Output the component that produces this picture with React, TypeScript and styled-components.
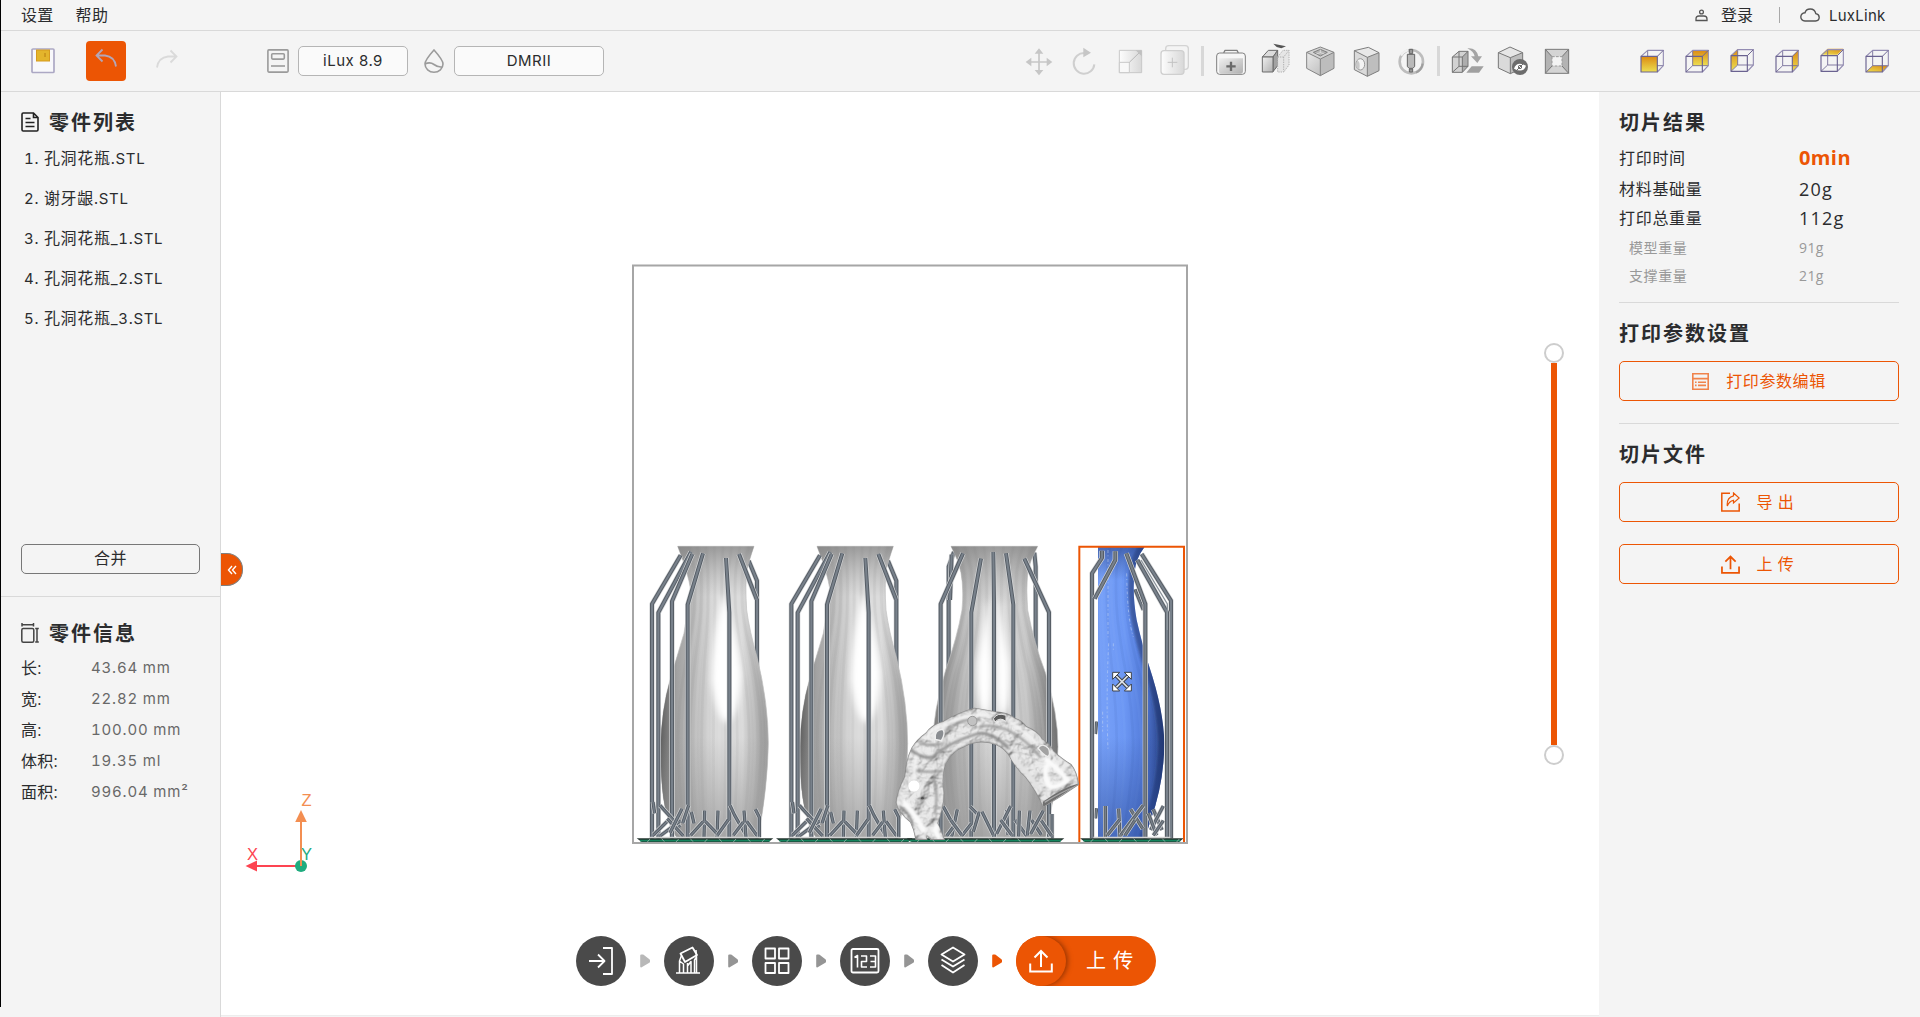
import React from "react";
import styled, { createGlobalStyle } from "styled-components";

const ORANGE = "#ec5504";
const PANEL = "#f4f4f4";
const LINE = "#d9d9d9";
const INK = "#2b2c2e";

const GlobalStyle = createGlobalStyle`
  * { box-sizing: border-box; }
  html, body { margin: 0; padding: 0; background: ${PANEL}; overflow: hidden; }
  body { font-family: "Open Sans", "Noto Sans CJK SC", sans-serif; color: ${INK}; }
  button { font-family: inherit; margin: 0; padding: 0; cursor: pointer; }
  svg { display: block; flex: none; }
`;

const Shell = styled.div`
  position: relative;
  width: 1920px;
  height: 1017px;
  display: flex;
  flex-direction: column;
  background: ${PANEL};
  overflow: hidden;
`;

const WindowEdge = styled.div`
  position: absolute;
  left: 0;
  top: 0;
  width: 1px;
  height: 1007px;
  background: #000;
`;

const MenuBar = styled.header`
  height: 31px;
  display: flex;
  align-items: center;
  padding: 0 33px 0 21px;
  border-bottom: 1px solid ${LINE};
  font-size: 16px;
`;

const MenuItem = styled.span<{ $gap?: number; $spacing?: number }>`
  line-height: 30px;
  letter-spacing: ${(p) => p.$spacing ?? 0.3}px;
  margin-right: ${(p) => p.$gap ?? 0}px;
  white-space: nowrap;
`;

const LinkItem = styled.span`
  width: 58px;
  font-family: Inter, sans-serif;
  font-size: 15px;
  line-height: 30px;
  padding-top: 2px;
  letter-spacing: 0.25px;
  white-space: nowrap;
`;

const Spacer = styled.div`
  flex: 1;
`;

const MenuDivider = styled.div`
  width: 1px;
  height: 16px;
  background: #a8a8a8;
  margin: 0 20px 0 26px;
`;

const ToolBar = styled.div`
  height: 61px;
  flex: none;
  display: flex;
  align-items: center;
  padding: 0 20px 1px 31px;
  border-bottom: 1px solid ${LINE};
`;

const UndoButton = styled.button`
  width: 40px;
  height: 40px;
  margin: 0 30px 0 31px;
  padding-bottom: 1px;
  display: flex;
  align-items: center;
  justify-content: center;
  border: 0;
  border-radius: 4px;
  background: ${ORANGE};
`;

const Select = styled.div<{ $width: number; $before: number; $after: number }>`
  width: ${(p) => p.$width}px;
  height: 30px;
  margin-left: ${(p) => p.$before}px;
  margin-right: ${(p) => p.$after}px;
  border: 1px solid #b5b5b5;
  border-radius: 5px;
  background: #fafafa;
  font-family: Inter, sans-serif;
  font-size: 15px;
  line-height: 28px;
  letter-spacing: 0.5px;
  text-align: center;
`;

const ToolGroup = styled.div`
  display: flex;
  align-items: center;
  margin-right: 50px;
`;

const ViewGroup = styled.div`
  display: flex;
`;

const ToolDivider = styled.div`
  width: 3px;
  height: 30px;
  background: #d8d8d8;
`;

const Body = styled.main`
  flex: 1;
  display: flex;
  min-height: 0;
`;

const LeftPanel = styled.aside`
  width: 221px;
  flex: none;
  border-right: 1px solid ${LINE};
`;

const PartSection = styled.section`
  height: 505px;
  display: flex;
  flex-direction: column;
  padding: 13px 20px 22px 21px;
  border-bottom: 1px solid ${LINE};
`;

const InfoSection = styled.section`
  padding: 19px 20px 0 21px;
`;

const Title = styled.h2<{ $gap?: number; $after?: number }>`
  height: 34px;
  margin: 0 0 ${(p) => p.$after ?? 0}px;
  display: flex;
  align-items: center;
  gap: ${(p) => p.$gap ?? 0}px;
  font-family: "Noto Sans CJK SC", sans-serif;
  font-size: 20px;
  font-weight: 700;
  line-height: 30px;
  letter-spacing: 2px;
`;

const PartItem = styled.div`
  height: 40px;
  padding-left: 3px;
  font-family: Inter, sans-serif;
  font-size: 15px;
  font-variant-numeric: tabular-nums;
  line-height: 40px;
  letter-spacing: 0.7px;
  white-space: pre;
`;

const Han = styled.span`
  font-family: "Noto Sans CJK SC", sans-serif;
  font-size: 16px;
  line-height: 1;
`;

const MergeButton = styled.button`
  width: 179px;
  height: 30px;
  margin-top: auto;
  padding-bottom: 1px;
  border: 1px solid #777;
  border-radius: 5px;
  background: transparent;
  color: ${INK};
  font-size: 16px;
  line-height: 27px;
  letter-spacing: 0.6px;
`;

const InfoRow = styled.div`
  height: 31px;
  display: flex;
  align-items: center;
  font-size: 16px;
  line-height: 30px;
  padding-bottom: 1px;
`;

const InfoLabel = styled.span`
  width: 70px;
  letter-spacing: 0.2px;
`;

const InfoValue = styled.span`
  font-family: Inter, sans-serif;
  font-size: 15px;
  font-variant-numeric: tabular-nums;
  color: #686868;
  letter-spacing: 0.8px;
  white-space: nowrap;
`;

const Viewport = styled.div`
  position: relative;
  width: 1378px;
  height: 924px;
  flex: none;
  background: #fff;
  display: flex;
  flex-direction: column;
  justify-content: flex-end;
  align-items: flex-start;
`;

const Scene = styled.svg`
  position: absolute;
  left: 0;
  top: 0;
`;

const CollapseTab = styled.button`
  position: absolute;
  left: 0;
  top: 461px;
  width: 22px;
  height: 33px;
  border: 1px solid #808080;
  border-left: 0;
  border-radius: 0 16px 16px 0;
  background: ${ORANGE};
  display: flex;
  align-items: center;
  justify-content: center;
`;

const Slider = styled.div`
  position: absolute;
  left: 1323px;
  top: 251px;
  width: 20px;
  height: 422px;
  display: flex;
  flex-direction: column;
  align-items: center;
`;

const Handle = styled.div`
  width: 20px;
  height: 20px;
  flex: none;
  border: 2px solid #cdcdcd;
  border-radius: 50%;
  background: #fff;
`;

const Track = styled.div`
  width: 6px;
  flex: 1;
  background: ${ORANGE};
`;

const Steps = styled.nav`
  position: relative;
  display: flex;
  align-items: center;
  gap: 14px;
  margin: 0 0 30px 355px;
`;

const StepButton = styled.button`
  width: 50px;
  height: 50px;
  border: 0;
  border-radius: 50%;
  background: #4a4a4a;
  display: flex;
  align-items: center;
  justify-content: center;
`;

const UploadPill = styled.button`
  width: 140px;
  height: 50px;
  border: 0;
  border-radius: 25px;
  background: ${ORANGE};
  color: #fff;
  display: flex;
  align-items: center;
  overflow: hidden;
  font-size: 20px;
  letter-spacing: 1px;
`;

const UploadCap = styled.span`
  width: 50px;
  height: 50px;
  border-radius: 50%;
  background: ${ORANGE};
  box-shadow: 2px 0 5px rgba(90, 30, 0, 0.55);
  display: flex;
  align-items: center;
  justify-content: center;
  margin-right: 20px;
`;

const RightPanel = styled.aside`
  flex: 1;
  padding: 13px 21px 0 20px;
`;

const ResultRow = styled.div<{ $height: number; $minor?: boolean }>`
  height: ${(p) => p.$height}px;
  display: flex;
  align-items: center;
  padding-left: ${(p) => (p.$minor ? 10 : 0)}px;
  padding-bottom: ${(p) => (p.$minor ? 1 : 2)}px;
  font-size: ${(p) => (p.$minor ? 14 : 16)}px;
  letter-spacing: ${(p) => (p.$minor ? 0.6 : 0.7)}px;
  color: ${(p) => (p.$minor ? "#999" : INK)};
  line-height: 28px;
`;

const ResultLabel = styled.span<{ $minor?: boolean }>`
  width: ${(p) => (p.$minor ? 170 : 180)}px;
`;

const ResultValue = styled.span<{ $kind?: "hot" | "minor" }>`
  font-size: ${(p) => (p.$kind === "hot" ? 20 : p.$kind === "minor" ? 14 : 18)}px;
  font-weight: ${(p) => (p.$kind === "hot" ? 700 : 400)};
  color: ${(p) => (p.$kind === "hot" ? ORANGE : "inherit")};
  letter-spacing: ${(p) => (p.$kind ? 0.4 : 1.2)}px;
`;

const Rule = styled.hr<{ $top: number; $bottom: number }>`
  height: 1px;
  border: 0;
  background: ${LINE};
  margin: ${(p) => p.$top}px 0 ${(p) => p.$bottom}px;
`;

const OutlineButton = styled.button<{ $gap: number; $top: number; $inset?: number }>`
  width: 280px;
  height: 40px;
  margin-top: ${(p) => p.$top}px;
  padding-right: ${(p) => p.$inset ?? 0}px;
  display: flex;
  align-items: center;
  justify-content: center;
  gap: ${(p) => p.$gap}px;
  border: 1px solid ${ORANGE};
  border-radius: 5px;
  background: transparent;
  color: ${ORANGE};
  font-size: 16px;
  letter-spacing: 0.6px;
`;

const Caption = styled.span`
  padding-bottom: 3px;
`;

/* ---------- toolbar drawings, three units per pixel ---------- */

const Tool = ({ x, w, children }: { x: number; w: number; children: React.ReactNode }) => (
  <svg width={w / 3} height={52} viewBox={`${x} 0 ${w} 156`} fill="none" strokeLinejoin="round">
    {children}
  </svg>
);

const GradientDefs = styled.svg`
  position: absolute;
`;

const Gradients = () => (
  <GradientDefs width="0" height="0">
    <defs>
      <linearGradient id="steel" x1="0" y1="0" x2="1" y2="1">
        <stop offset="0" stopColor="#f0f0f0" />
        <stop offset="1" stopColor="#b0b0b0" />
      </linearGradient>
      <linearGradient id="pale" x1="0" y1="0" x2="1" y2="0">
        <stop offset="0" stopColor="#fdfdfd" />
        <stop offset="1" stopColor="#d8d8d8" />
      </linearGradient>
      <linearGradient id="gold" x1="0" y1="0" x2="0" y2="1">
        <stop offset="0" stopColor="#dc8a12" />
        <stop offset="1" stopColor="#ecdf52" />
      </linearGradient>
      <linearGradient id="goldFlat" x1="0" y1="1" x2="1" y2="0">
        <stop offset="0" stopColor="#ecdf52" />
        <stop offset="1" stopColor="#dc8a12" />
      </linearGradient>
    </defs>
  </GradientDefs>
);

const MoveTool = () => (
  <Tool x={9} w={135}>
    <path d="M46 81H98M72 54V108" stroke="#c6c6c6" strokeWidth="5" />
    <path d="M32 81l17-13v26zM112 81l-17-13v26zM72 40l-13 16h26zM72 121l-13-16h26z" fill="#c6c6c6" />
  </Tool>
);

const RotateTool = () => (
  <Tool x={144} w={135}>
    <path d="M208 54A31 31 0 1 0 238 88" stroke="#cfcfcf" strokeWidth="6" />
    <path d="M205 38l23 15-23 14z" fill="#c6c6c6" />
  </Tool>
);

const ScaleTool = () => (
  <Tool x={279} w={135}>
    <path d="M313 46h67v67h-67z" fill="url(#pale)" stroke="#c8c8c8" strokeWidth="3" />
    <path d="M313 82h30v31h-30z" fill="#f8f8f8" stroke="#c8c8c8" strokeWidth="3" />
    <path d="M343 82L378 48" stroke="#b8b8b8" strokeWidth="3" />
    <path d="M362 46h18v18z" fill="#c0c0c0" />
  </Tool>
);

const CopyTool = () => (
  <Tool x={414} w={144}>
    <rect x="452" y="32" width="68" height="71" rx="9" stroke="#d3d3d3" strokeWidth="4" />
    <rect x="438" y="47" width="69" height="71" rx="9" fill="url(#pale)" stroke="#cfcfcf" strokeWidth="4" />
    <path d="M458 82h29M472 68v29" stroke="#c2c2c2" strokeWidth="3" />
  </Tool>
);

const RepairTool = () => (
  <Tool x={567} w={147}>
    <path d="M626 54l4-8h36l4 8" stroke="#808080" strokeWidth="4" />
    <rect x="605" y="54" width="86" height="64" rx="9" fill="#f6f6f6" stroke="#808080" strokeWidth="3" />
    <path d="M612 70h72v38q0 8-8 8h-56q-8 0-8-8z" fill="url(#steel)" />
    <path d="M634 94h28M648 80v28" stroke="#6a6a6a" strokeWidth="7" />
  </Tool>
);

const CutTool = () => (
  <Tool x={714} w={135}>
    <path d="M742 66l18-20h28l-14 20z" fill="#dcdcdc" stroke="#6b6b6b" strokeWidth="3" />
    <path d="M774 66l14-20v46l-14 18z" fill="#a2a2a2" stroke="#6b6b6b" strokeWidth="3" />
    <path d="M742 66h32v45h-32z" fill="url(#steel)" stroke="#6b6b6b" strokeWidth="3" />
    <path d="M788 66l16-20h18v44l-16 21h-18z" fill="#e6e6e6" stroke="#b0b0b0" strokeWidth="3" strokeDasharray="4 3" />
    <path d="M806 66v44M788 66h18l16-20" stroke="#b0b0b0" strokeWidth="3" strokeDasharray="4 3" />
    <path d="M775 26l38 8-14 6-14-4z" fill="#555" />
  </Tool>
);

const HollowTool = () => (
  <Tool x={24} w={135}>
    <path d="M50 52L91 36l41 16v48l-41 22-41-22z" fill="url(#steel)" />
    <path d="M50 52L91 36l41 16-41 20z" fill="#d4d4d4" />
    <path d="M91 72l41-20v48l-41 22z" fill="#bdbdbd" />
    <path d="M70 52l21-9 21 9-21 11z" fill="#b4b4b4" stroke="#808080" strokeWidth="3" />
    <path d="M91 44v9l-12 4M91 53l12 4" stroke="#eee" strokeWidth="2" />
    <path d="M50 52L91 36l41 16v48l-41 22-41-22zM50 52l41 20 41-20M91 72v50" stroke="#858585" strokeWidth="3" />
  </Tool>
);

const PunchTool = () => (
  <Tool x={159} w={135}>
    <path d="M193 47l42-10 32 16-35 14z" fill="#e8e8e8" />
    <path d="M193 47l39 20v57l-39-20z" fill="#dadada" />
    <path d="M232 67l35-14v54l-35 17z" fill="#bebebe" />
    <path d="M193 47l42-10 32 16v54l-35 17-39-20zM193 47l39 20 35-14M232 67v57" stroke="#7d7d7d" strokeWidth="3" />
    <ellipse cx="211" cy="88" rx="13" ry="17" fill="#f4f4f4" stroke="#999" strokeWidth="3" />
    <path d="M202 76q10 5 6 27q-9-2-10-14z" fill="#c8c8c8" />
  </Tool>
);

const DrainTool = () => (
  <Tool x={294} w={147}>
    <circle cx="364" cy="80" r="35" stroke="#bdbdbd" strokeWidth="8" />
    <path d="M333 62a35 35 0 0 1 22-17" stroke="#f0f0f0" strokeWidth="7" />
    <path d="M398 86a35 35 0 0 1-20 27" stroke="#9e9e9e" strokeWidth="6" />
    <path d="M352 58h22v36l-5 6h-12l-5-6z" fill="#b9b9b9" stroke="#666" strokeWidth="3" />
    <path d="M358 43h10v13h-10zM358 102h10v9h-10z" fill="#999" stroke="#666" strokeWidth="3" />
  </Tool>
);

const LayFlatTool = () => (
  <Tool x={450} w={150}>
    <path d="M487 66l20-17h27v45l-17 18h-30z" fill="#d2d2d2" />
    <path d="M517 66l17-17v45l-17 18z" fill="#adadad" />
    <path d="M487 66l20-17h27v45l-17 18h-30zM487 66h30l17-17M517 66v46M507 49v45h27M507 94l-20 18" stroke="#747474" strokeWidth="3" />
    <path d="M532 40q27-3 33 24h11l-14 20-19-20h11q-3-15-22-24z" fill="#a5a5a5" />
    <path d="M545 94h36l-14 19h-38z" fill="#a0a0a0" />
  </Tool>
);

const HideTool = () => (
  <Tool x={600} w={141}>
    <path d="M625 53l35-17 38 17-37 15z" fill="#e6e6e6" />
    <path d="M625 53l36 15v48l-36-17z" fill="#dadada" />
    <path d="M661 68l37-15v46l-37 17z" fill="#bdbdbd" />
    <path d="M625 53l35-17 38 17v46l-37 17-36-17zM625 53l36 15 37-15M661 68v48" stroke="#777" strokeWidth="3" />
    <circle cx="690" cy="96" r="24" fill="#6c6c6c" />
    <path d="M672 101q8-24 36-9q-8 24-36 9z" fill="#fff" />
    <circle cx="690" cy="96" r="5" stroke="#6c6c6c" strokeWidth="3" />
    <path d="M676 110L704 82" stroke="#6c6c6c" strokeWidth="3" />
  </Tool>
);

const FrameTool = () => (
  <Tool x={741} w={129}>
    <path d="M766 43h70v72h-70z" fill="#d4d4d4" />
    <path d="M766 43l20 22v28l-20 22zM836 43l-20 22v28l20 22z" fill="#b3b3b3" />
    <path d="M766 43h70v72h-70zM766 43l20 22M836 43l-20 22M766 115l20-22M836 115l-20-22" stroke="#777" strokeWidth="3" />
    <path d="M786 65h30v28h-30z" fill="#f3f3f3" stroke="#999" strokeWidth="3" strokeDasharray="8 4" />
  </Tool>
);

const cubeFaces: { fill: string; d: string; up?: boolean }[] = [
  { fill: "url(#gold)", d: "M33 49h49v47H33z" },
  { fill: "url(#gold)", d: "M53 31h47v46H53z" },
  { fill: "url(#gold)", d: "M33 49l20-20v47L33 95z", up: true },
  { fill: "url(#gold)", d: "M82 49l18-18v46L82 96z" },
  { fill: "url(#goldFlat)", d: "M33 46l20-18h47L82 46z", up: true },
  { fill: "url(#goldFlat)", d: "M33 96l20-19h47L82 96z" },
];

const ViewCube = ({ index }: { index: number }) => {
  const face = cubeFaces[index];
  return (
    <svg width={45} height={42} viewBox="0 0 135 126" fill="none" strokeLinejoin="round">
      <g transform={`translate(0 ${face.up ? -2 : 0})`}>
        {index !== 0 && <path d={face.d} fill={face.fill} />}
        <path d="M53 31v46L33 96M53 77h47" stroke="#6f6794" strokeWidth="2.6" />
        {index === 0 && <path d={face.d} fill={face.fill} />}
        <path d="M33 49l20-18h47v46L82 96" stroke="#938cb2" strokeWidth="3.4" />
        <path d="M82 49l18-18" stroke="#6f6794" strokeWidth="3" />
        <path d="M33 49h49v47H33z" stroke="#6a6290" strokeWidth="3.4" />
      </g>
    </svg>
  );
};

const SaveIcon = () => (
  <svg width="24" height="26" viewBox="0 0 24 26" fill="none">
    <rect x="1" y="1" width="22" height="23.5" rx="1" fill="#f8f8fb" stroke="#aca8c4" strokeWidth="1.7" />
    <rect x="5.5" y="2" width="13" height="11" fill="#e3b52c" stroke="#d69a1f" />
    <path d="M14 5v4" stroke="#b87d10" />
  </svg>
);

const UndoIcon = ({ color, flip }: { color: string; flip?: boolean }) => (
  <svg width="22" height="24" viewBox="0 0 22 24" fill="none" stroke={color} strokeWidth="1.8">
    <g transform={flip ? "matrix(-1 0 0 1 22 0)" : undefined}>
      <path d="M7.5 1.5L1.5 7.5L7.5 13.5M2 7.5h8q9.5 1 11 11" />
    </g>
  </svg>
);

const Wide = styled.span<{ $after: number }>`
  display: flex;
  margin-right: ${(p) => p.$after}px;
`;

/* ---------- build plate drawing, three units per pixel ---------- */

type Strut = [number, number][];

const toPath = (s: Strut) => "M" + s.map((p) => p.join(" ")).join("L");

const Struts = ({ items, width = 12 }: { items: Strut[]; width?: number }) => (
  <g fill="none" strokeLinejoin="round" strokeLinecap="butt">
    {items.map((s, i) => (
      <g key={i}>
        <path d={toPath(s)} stroke="#d5d7d9" strokeWidth={width + 4} />
        <path d={toPath(s)} stroke="#575e66" strokeWidth={width} />
        <path d={toPath(s)} stroke="#78818b" strokeWidth={width - 6} />
      </g>
    ))}
  </g>
);

const Base = ({ from, to }: { from: number; to: number }) => {
  const marks: number[] = [];
  for (let x = from + 32; x < to - 20; x += 43) marks.push(x);
  return (
    <g>
      <path d={`M${from + 40} 922H${to - 40}`} stroke="#d2d2d2" strokeWidth="4" />
      <path d={`M${from} 925H${to}L${to - 14} 936H${from + 15}z`} fill="#24332e" />
      <path d={`M${from + 10} 932H${to - 10}`} stroke="#13845d" strokeWidth="5" />
      {marks.map((x, i) => (
        <path key={x} d={`M${x} ${i % 2 ? 926 : 936}l8 ${i % 2 ? 9 : -9}`} stroke="#b9c9c2" strokeWidth="2" />
      ))}
    </g>
  );
};

/* A silhouette edge: a start point, then control/end pairs of quadratic curves. */
type Edge = [number, number][];

const sideEdge: Edge = [
  [402, 49], [388, 90], [381, 118], [375, 165], [380, 240], [388, 300], [412, 385],
  [445, 520], [445, 640], [443, 770], [414, 925],
];
const frontEdge: Edge = [
  [473, 49], [450, 90], [443, 128], [438, 180], [443, 240], [462, 340], [497, 430],
  [534, 550], [534, 650], [532, 770], [496, 925],
];
const blueEdge: Edge = [
  [794, 50], [768, 84], [764, 124], [756, 190], [770, 270], [788, 350], [808, 410],
  [851, 540], [853, 640], [852, 760], [795, 925],
];

const meridian = (edge: Edge, axis: number, f: number) => {
  const p = edge.map(([x, y]) => `${(axis + (x - axis) * f).toFixed(1)} ${y}`);
  let d = `M${p[0]}`;
  for (let i = 1; i < p.length; i += 2) d += `Q${p[i]} ${p[i + 1]}`;
  return d;
};

const Facets = ({ edge, axis, from, dark, light }: { edge: Edge; axis: number; from: number; dark: string; light: string }) => {
  const list: number[] = [];
  for (let f = from; f < 0.98; f += 0.115) list.push(f);
  return (
    <g fill="none" strokeWidth="8" strokeOpacity="0.08">
      {list.map((f, i) => (
        <path key={i} d={meridian(edge, axis, f)} stroke={i % 2 ? light : dark} />
      ))}
    </g>
  );
};

const sideBack: Strut = [[386, 92], [411, 152], [411, 925]];
const sideOver: Strut = [[357, 72], [410, 208]];
const sideFront: Strut[] = [
  [[182, 76], [96, 222], [96, 925]],
  [[213, 66], [115, 248], [115, 925]],
  [[217, 72], [156, 214], [156, 925]],
  [[249, 70], [203, 224], [203, 925]],
  [[318, 84], [328, 248], [328, 925]],
];
const sideFeet: Strut[] = [
  [[120, 826], [180, 892]], [[99, 816], [104, 850]], [[100, 915], [150, 866]], [[120, 918], [182, 872]],
  [[142, 866], [190, 918]], [[186, 836], [150, 908]], [[206, 826], [188, 880]], [[214, 846], [222, 880]],
  [[254, 842], [252, 922]], [[294, 842], [291, 922]], [[250, 874], [212, 916]], [[256, 874], [298, 918]],
  [[326, 868], [292, 916]], [[330, 826], [344, 856], [376, 912]], [[372, 842], [378, 922]],
  [[370, 876], [340, 916]], [[380, 874], [412, 918]], [[406, 838], [418, 862], [418, 922]],
];

const SideVase = ({ id }: { id: string }) => {
  const outline =
    "M173 49H402Q388 90 381 118Q375 165 380 240Q388 300 412 385Q445 520 445 640Q443 770 414 925H172Q150 895 135 830Q122 770 122 650Q124 540 150 450L192 310L212 180Q205 130 173 49z";
  return (
    <g>
      <Struts items={[sideBack]} />
      <clipPath id={id}>
        <path d={outline} />
      </clipPath>
      <path d={outline} fill="url(#vaseGrey)" stroke="#bfbfbf" strokeWidth="2" />
      <g clipPath={`url(#${id})`}>
        <path d="M110 925V300H195Q165 400 163 620T178 925z" fill="url(#vaseDark)" />
        <Facets edge={sideEdge} axis={290} from={-0.75} dark="#707070" light="#ffffff" />
        <path d="M308 190Q276 330 274 450Q290 570 320 580Q358 560 364 430Q350 300 308 190z" fill="#fff" filter="url(#glow)" />
        <path d="M100 620H460V930H100z" fill="url(#fadeDown)" />
        <path d="M150 45H420V200H150z" fill="url(#fadeUp)" />
      </g>
      <Struts items={[sideOver]} />
      <Struts items={sideFront} />
      <Struts items={sideFeet} width={10} />
      <Base from={50} to={460} />
    </g>
  );
};

const FrontVase = () => {
  const outline =
    "M213 49H473Q450 90 443 128Q438 180 443 240Q462 340 497 430Q534 550 534 650Q532 770 496 925H190Q162 830 157 650Q160 540 197 420Q232 320 246 240Q252 180 243 128Q235 90 213 49z";
  return (
    <g>
      <Struts items={[[[222, 66], [206, 110], [206, 600]], [[215, 74], [210, 210]], [[463, 68], [467, 110], [467, 600]]]} />
      <clipPath id="frontClip">
        <path d={outline} />
      </clipPath>
      <path d={outline} fill="url(#vaseFront)" stroke="#bfbfbf" strokeWidth="2" />
      <g clipPath="url(#frontClip)">
        <Facets edge={frontEdge} axis={345} from={-0.95} dark="#6c6c6c" light="#ffffff" />
        <path d="M322 200L290 400Q288 550 318 555Q336 540 334 400zM356 200L388 400Q392 550 366 555Q350 540 350 400z" fill="#fff" filter="url(#glow)" />
        <path d="M100 600H560V930H100z" fill="url(#fadeDown)" />
        <path d="M200 45H480V230H200z" fill="url(#fadeUp)" />
      </g>
      <Struts
        items={[
          [[249, 70], [182, 222], [182, 925]],
          [[303, 86], [274, 247], [274, 925]],
          [[340, 66], [342, 214], [342, 925]],
          [[378, 70], [400, 224], [400, 925]],
          [[433, 86], [507, 247], [507, 925]],
        ]}
      />
      <Struts
        width={10}
        items={[
          [[190, 830], [212, 870]], [[232, 838], [215, 920]], [[200, 918], [228, 880]], [[270, 830], [300, 860]],
          [[298, 845], [280, 905]], [[306, 845], [340, 915]], [[245, 918], [275, 880]], [[380, 840], [384, 915]],
          [[392, 828], [350, 912]], [[406, 870], [440, 918]], [[418, 842], [416, 920]], [[450, 842], [442, 916]],
          [[455, 870], [484, 915]], [[490, 842], [452, 912]], [[516, 852], [516, 925]], [[484, 872], [515, 918]],
          [[212, 870], [245, 915]], [[362, 870], [395, 915]],
        ]}
      />
      <Base from={80} to={553} />
    </g>
  );
};

const BlueVase = () => {
  const outline = "M654 50H794Q768 84 764 124Q756 190 770 270Q788 350 808 410Q851 540 853 640Q852 760 812 870L795 925H654z";
  return (
    <g>
      <clipPath id="blueClip">
        <path d={outline} />
      </clipPath>
      <Struts items={[[[650, 575], [646, 612]], [[650, 835], [646, 865]], [[765, 178], [790, 240]]]} width={10} />
      <path d={outline} fill="url(#vaseBlue)" />
      <g clipPath="url(#blueClip)">
        <Facets edge={blueEdge} axis={640} from={0.1} dark="#2b4c98" light="#9bbcff" />
        <path d={meridian(blueEdge, 640, 0.97)} stroke="#20376f" strokeOpacity="0.55" strokeWidth="26" fill="none" filter="url(#soft)" />
        <path d="M640 620H860V930H640z" fill="url(#blueDown)" />
        <path d="M640 50H860V150H640z" fill="url(#blueUp)" />
      </g>
      <path d="M684 60V330M686 340Q678 500 684 660M740 130Q742 270 760 320M700 340v26M668 545v60" stroke="#c9d8f2" strokeOpacity="0.65" strokeWidth="2.4" strokeDasharray="9 7 3 8" fill="none" />
      <Struts
        items={[
          [[666, 62], [666, 84], [636, 130], [636, 925]],
          [[706, 64], [706, 90], [644, 206]],
          [[739, 70], [796, 222], [796, 925]],
          [[785, 72], [873, 212], [873, 925]],
          [[772, 90], [861, 247], [861, 925]],
        ]}
      />
      <path d="M783 90L862 222V300" stroke="#8d959d" strokeWidth="4" fill="none" />
      <Struts
        width={10}
        items={[
          [[676, 828], [676, 922]], [[716, 836], [720, 922]], [[752, 838], [788, 896]], [[790, 826], [722, 916]],
          [[720, 868], [682, 916]], [[765, 870], [735, 916]], [[820, 838], [846, 900]], [[850, 828], [812, 900]],
          [[805, 850], [830, 916]], [[850, 872], [820, 916]],
        ]}
      />
      <Base from={600} to={911} />
      <path d="M598 936V50H912V936" fill="none" stroke={ORANGE} strokeWidth="6" />
    </g>
  );
};

const ARCH =
  "M108 928Q104 900 92 876Q58 850 49 818Q52 785 75 740Q78 690 96 654Q112 628 138 610Q155 585 190 575Q235 548 284 535Q315 540 345 546Q385 548 405 566Q425 572 438 590Q475 605 486 628Q508 640 520 664Q548 690 573 704Q590 725 595 763Q545 798 490 830Q468 780 438 742Q412 720 385 672Q365 645 330 638Q290 630 255 648Q215 662 196 702Q184 735 191 790Q190 835 172 880Q182 900 192 928H152Q136 905 140 928z";

const GumModel = () => (
  <g>
    <clipPath id="archClip">
      <path d={ARCH} />
    </clipPath>
    <path d={ARCH} fill="#cacaca" stroke="#8d8d8d" strokeWidth="4" />
    <g clipPath="url(#archClip)">
      <rect x="40" y="525" width="565" height="410" filter="url(#bumps)" opacity="0.6" />
      <g fill="none" strokeLinecap="round" filter="url(#soft)">
        <path d="M60 830Q100 860 96 890M92 660Q130 690 160 680Q200 640 290 612Q330 600 385 655" stroke="#858585" strokeWidth="7" />
        <path d="M100 720Q140 730 188 722M160 740Q176 790 165 850M120 640Q160 650 190 640M200 600Q250 560 300 570M300 590Q350 580 400 610Q450 640 480 680" stroke="#949494" strokeWidth="6" />
        <path d="M110 680Q100 720 104 745M140 625Q150 590 230 570Q280 550 320 556M390 575Q440 610 470 640" stroke="#f2f2f2" strokeWidth="9" />
        <path d="M75 820Q110 860 130 900M170 890Q160 900 176 920M500 690Q540 720 560 750Q540 770 510 770Q490 740 500 710" stroke="#fafafa" strokeWidth="17" />
        <path d="M400 690Q440 720 470 770" stroke="#e3e3e3" strokeWidth="16" />
        <path d="M196 706Q214 664 255 650Q290 632 330 641Q366 648 385 676" stroke="#8a8a8a" strokeWidth="5" />
      </g>
      <path d="M490 832L488 816Q550 770 598 760z" fill="#6f6f6f" />
      <path d="M494 817Q544 786 590 768" stroke="#a8a8a8" strokeWidth="4" fill="none" />
    </g>
    <path d="M166 628Q162 600 188 598Q198 610 184 632z" fill="#8a8d91" stroke="#efefef" strokeWidth="4" />
    <path d="M340 566Q352 546 378 556V574Q360 560 345 576z" fill="#5a5a5a" stroke="#e4e4e4" strokeWidth="3" />
    <path d="M474 654Q488 636 506 656Q512 672 504 680Q490 676 474 654z" fill="#a2a2a2" stroke="#ececec" strokeWidth="4" />
    <circle cx="277" cy="573" r="14" fill="#c2c2c2" stroke="#9a9a9a" strokeWidth="3" />
    <circle cx="102" cy="768" r="18" fill="#fff" stroke="#ddd" strokeWidth="2" />
  </g>
);

const MoveCursor = () => (
  <g transform="translate(726 455)">
    <path d="M-20-20L20 20M20-20L-20 20" stroke="#3c4148" strokeWidth="11" />
    <path d="M-20-20L20 20M20-20L-20 20" stroke="#dfe3e8" strokeWidth="5" />
    {[0, 90, 180, 270].map((a) => (
      <path key={a} transform={`rotate(${a})`} d="M-28-28H-7L-28-7z" fill="#fff" stroke="#3c4148" strokeWidth="3" />
    ))}
  </g>
);

const BuildScene = () => (
  <Scene width={1378} height={924} viewBox="221 92 1378 924">
    <defs>
      <linearGradient id="vaseGrey" gradientUnits="userSpaceOnUse" x1="122" y1="0" x2="446" y2="0">
        <stop offset="0" stopColor="#8c8c8c" />
        <stop offset="0.25" stopColor="#b0b0b0" />
        <stop offset="0.5" stopColor="#dadada" />
        <stop offset="0.75" stopColor="#dadada" />
        <stop offset="1" stopColor="#949494" />
      </linearGradient>
      <linearGradient id="vaseDark" gradientUnits="userSpaceOnUse" x1="122" y1="0" x2="180" y2="0">
        <stop offset="0" stopColor="#606060" />
        <stop offset="0.6" stopColor="#8c8c8c" />
        <stop offset="1" stopColor="#b0b0b0" stopOpacity="0" />
      </linearGradient>
      <linearGradient id="vaseFront" gradientUnits="userSpaceOnUse" x1="157" y1="0" x2="534" y2="0">
        <stop offset="0" stopColor="#7e7e7e" />
        <stop offset="0.25" stopColor="#b8b8b8" />
        <stop offset="0.5" stopColor="#dedede" />
        <stop offset="0.75" stopColor="#c4c4c4" />
        <stop offset="1" stopColor="#6e6e6e" />
      </linearGradient>
      <linearGradient id="vaseBlue" gradientUnits="userSpaceOnUse" x1="654" y1="0" x2="853" y2="0">
        <stop offset="0" stopColor="#78a1f8" />
        <stop offset="0.4" stopColor="#6c97f4" />
        <stop offset="0.68" stopColor="#557ddb" />
        <stop offset="0.85" stopColor="#3a59a8" />
        <stop offset="1" stopColor="#223a78" />
      </linearGradient>
      <linearGradient id="fadeDown" x1="0" y1="0" x2="0" y2="1">
        <stop offset="0" stopColor="#9a9a9a" stopOpacity="0" />
        <stop offset="1" stopColor="#909090" stopOpacity="0.7" />
      </linearGradient>
      <linearGradient id="fadeUp" x1="0" y1="0" x2="0" y2="1">
        <stop offset="0" stopColor="#7c7c7c" stopOpacity="0.7" />
        <stop offset="1" stopColor="#9a9a9a" stopOpacity="0" />
      </linearGradient>
      <linearGradient id="blueDown" x1="0" y1="0" x2="0" y2="1">
        <stop offset="0" stopColor="#24428c" stopOpacity="0" />
        <stop offset="1" stopColor="#24428c" stopOpacity="0.55" />
      </linearGradient>
      <linearGradient id="blueUp" x1="0" y1="0" x2="0" y2="1">
        <stop offset="0" stopColor="#213a7c" stopOpacity="0.55" />
        <stop offset="1" stopColor="#213a7c" stopOpacity="0" />
      </linearGradient>
      <filter id="glow" x="-50%" y="-30%" width="200%" height="160%">
        <feGaussianBlur stdDeviation="9" />
      </filter>
      <filter id="soft" x="-30%" y="-30%" width="160%" height="160%">
        <feGaussianBlur stdDeviation="2.5" />
      </filter>
      <filter id="bumps" x="0" y="0" width="1" height="1">
        <feTurbulence type="fractalNoise" baseFrequency="0.016" numOctaves="4" seed="7" result="noise" />
        <feColorMatrix in="noise" type="matrix" values="0 0 0 0 0  0 0 0 0 0  0 0 0 0 0  1 0 0 0 0" />
        <feDiffuseLighting surfaceScale="30" diffuseConstant="1.1" lightingColor="#f6f6f6">
          <feDistantLight azimuth="230" elevation="58" />
        </feDiffuseLighting>
      </filter>
    </defs>
    <rect x="633" y="265.5" width="554" height="577.5" fill="none" stroke="#a6a6a6" strokeWidth="2" />
    <g transform="translate(620 530) scale(0.33333)">
      <SideVase id="vaseA" />
      <g transform="translate(418 0)">
        <SideVase id="vaseB" />
      </g>
      <g transform="translate(780 0)">
        <FrontVase />
        <BlueVase />
        <GumModel />
        <MoveCursor />
      </g>
    </g>
    <g fontFamily="Liberation Sans, sans-serif" fontSize="16.5">
      <path d="M301 866H255" stroke="#fd4451" strokeWidth="2" />
      <path d="M245.5 866l11.5-5.5v11z" fill="#fd4451" />
      <circle cx="301" cy="866" r="6" fill="#1fac7f" />
      <path d="M301 866V820" stroke="#f38e51" strokeWidth="2" />
      <path d="M301 810l-5.8 12h11.6z" fill="#f38e51" />
      <g>
        <text x="247" y="860" fill="#fd4451">X</text>
        <text x="301" y="860" fill="#1fac7f">Y</text>
        <text x="301.5" y="806" fill="#f38e51">Z</text>
      </g>
    </g>
    <path d="M221 1015.5H1599" stroke="#ededed" />
  </Scene>
);

/* ---------- workflow icons ---------- */

const StepIcon = ({ children }: { children: React.ReactNode }) => (
  <svg width="30" height="30" viewBox="0 0 30 30" fill="none" stroke="#fff" strokeWidth="1.8" strokeLinejoin="round">
    {children}
  </svg>
);

const NextMark = ({ color }: { color: string }) => (
  <svg width="10" height="14" viewBox="0 0 10 14">
    <path d="M1.2 1.6V12.4L8.8 8Q9.6 7 8.8 6L3 1.6z" fill={color} stroke={color} strokeWidth="2" strokeLinejoin="round" />
  </svg>
);

const UploadIcon = ({ size, stroke }: { size: number; stroke: number }) => (
  <svg width={size} height={size} viewBox="0 0 24 24" fill="none" stroke="currentColor" strokeWidth={stroke}>
    <path d="M1.2 14.5V22.5H22.8V14.5M12 18V2M5.5 8.5L12 2L18.5 8.5" />
  </svg>
);

const stepIcons = [
  <StepIcon key="in">
    <path d="M3 15H18M12 8.5L18.5 15L12 21.5M17 2H26V28H17" />
  </StepIcon>,
  <StepIcon key="support">
    <path d="M2 27H26M5.5 27V15L7.5 9.5M5.5 15L9.5 18V27M13.5 27V17M13.5 20L17 15.5V27M20.5 27V14L22.5 11V27M22.5 11L22 4" strokeWidth="1.5" />
    <path d="M6.5 7.5L18.5 1.5L23 9L11 16z" />
  </StepIcon>,
  <StepIcon key="layout">
    <path d="M3.5 2.5H13V12.5H3.5zM17 2.5H26.5V12.5H17zM3.5 17H13V27H3.5zM17 17H26.5V27H17z" />
  </StepIcon>,
  <StepIcon key="label">
    <rect x="1.5" y="3" width="27" height="23.5" rx="1.5" />
    <path d="M4.5 11.5L7.5 9.5V21.5M11 10H16.5V15.5H11.5V21H17M20 10H25.5V21H20M20.5 15.5H25.5" strokeWidth="1.6" />
  </StepIcon>,
  <StepIcon key="slice">
    <path d="M15 1.5L26.5 8.5L15 15.5L3.5 8.5zM3.5 13.5L15 20.5L26.5 13.5M3.5 19L15 26.5L26.5 19" />
  </StepIcon>,
];

const parts: [string, string][] = [
  ["孔洞花瓶", ".STL"],
  ["谢牙龈", ".STL"],
  ["孔洞花瓶", "_1.STL"],
  ["孔洞花瓶", "_2.STL"],
  ["孔洞花瓶", "_3.STL"],
];

const info: [string, string][] = [
  ["长:", "43.64 mm"],
  ["宽:", "22.82 mm"],
  ["高:", "100.00 mm"],
  ["体积:", "19.35 ml"],
  ["面积:", "996.04 mm²"],
];

export default function App() {
  return (
    <Shell>
      <GlobalStyle />
      <Gradients />
      <MenuBar>
        <MenuItem $gap={22}>设置</MenuItem>
        <MenuItem>帮助</MenuItem>
        <Spacer />
        <Wide $after={13}>
          <svg width="13" height="13" viewBox="0 0 13 13" fill="none" stroke="#555" strokeWidth="1.3">
            <circle cx="6.5" cy="3" r="1.9" />
            <path d="M1 11.5V10Q1 7 4 7H9Q12 7 12 10V11.5z" />
          </svg>
        </Wide>
        <MenuItem $spacing={0}>登录</MenuItem>
        <MenuDivider />
        <Wide $after={9}>
          <svg width="20" height="14" viewBox="0 0 20 14" fill="none" stroke="#555" strokeWidth="1.4">
            <path d="M5 13H15.5Q19.2 12.6 19.2 9.2Q19 6 15.8 5.6Q14.8 1 10.2 1Q6 1 5 4.8Q1 5.2 0.8 9Q1 12.6 5 13z" />
          </svg>
        </Wide>
        <LinkItem>LuxLink</LinkItem>
      </MenuBar>
      <ToolBar>
        <SaveIcon />
        <UndoButton>
          <UndoIcon color="#b3a6b8" />
        </UndoButton>
        <Wide $after={89}>
          <UndoIcon color="#dadada" flip />
        </Wide>
        <svg width="22" height="24" viewBox="0 0 22 24" fill="none" stroke="#9b9b9b" strokeWidth="1.6">
          <rect x="0.9" y="0.9" width="20.2" height="22.2" rx="1" />
          <rect x="4.7" y="4.7" width="12.6" height="5.4" rx="1" />
          <path d="M4 17H18" />
        </svg>
        <Select $width={110} $before={9} $after={16}>iLux 8.9</Select>
        <svg width="20" height="24" viewBox="0 0 20 24" fill="none" stroke="#9b9b9b" strokeWidth="1.6">
          <path d="M10 1Q1 11 1 15A9 8.2 0 0 0 19 15Q19 11 10 1zM1 15Q6 12.5 10 15.5T18 18" />
        </svg>
        <Select $width={150} $before={10} $after={0}>DMRII</Select>
        <Spacer />
        <ToolGroup>
          <MoveTool />
          <RotateTool />
          <ScaleTool />
          <CopyTool />
          <ToolDivider />
          <RepairTool />
          <CutTool />
          <HollowTool />
          <PunchTool />
          <DrainTool />
          <ToolDivider />
          <LayFlatTool />
          <HideTool />
          <FrameTool />
        </ToolGroup>
        <ViewGroup>
          {cubeFaces.map((_, i) => (
            <ViewCube key={i} index={i} />
          ))}
        </ViewGroup>
      </ToolBar>
      <Body>
        <LeftPanel>
          <PartSection>
            <Title $gap={10}>
              <svg width="18" height="20" viewBox="0 0 18 20" fill="none" stroke="#222" strokeWidth="1.6">
                <path d="M12.5 1H2.2Q1 1 1 2.2V17.8Q1 19 2.2 19H15.8Q17 19 17 17.8V5.5zM12.5 1V5.5H17M4.5 6.5H9.5M4.5 10.5H13.5M4.5 14.5H13.5" />
              </svg>
              零件列表
            </Title>
            {parts.map(([name, suffix], i) => (
              <PartItem key={i}>
                {`${i + 1}. `}
                <Han>{name}</Han>
                {suffix}
              </PartItem>
            ))}
            <MergeButton>合并</MergeButton>
          </PartSection>
          <InfoSection>
            <Title $gap={10} $after={3}>
              <svg width="18" height="20" viewBox="0 0 18 20" fill="none" stroke="#444" strokeWidth="1.5">
                <rect x="0.8" y="5.5" width="12" height="13.7" rx="1.5" />
                <path d="M1 1.8H12.5M1 0V3.6M12.5 0V3.6M16 5.5V19M14.2 5.5H17.8M14.2 19H17.8" />
              </svg>
              零件信息
            </Title>
            {info.map(([label, value]) => (
              <InfoRow key={label}>
                <InfoLabel>{label}</InfoLabel>
                <InfoValue>{value}</InfoValue>
              </InfoRow>
            ))}
          </InfoSection>
        </LeftPanel>
        <Viewport>
          <BuildScene />
          <CollapseTab>
            <svg width="10" height="10" viewBox="0 0 10 10" fill="none" stroke="#fff" strokeWidth="1.4">
              <path d="M5 1L1.5 5L5 9M9 1L5.5 5L9 9" />
            </svg>
          </CollapseTab>
          <Slider>
            <Handle />
            <Track />
            <Handle />
          </Slider>
          <Steps>
            {stepIcons.map((icon, i) => (
              <React.Fragment key={i}>
                <StepButton>{icon}</StepButton>
                <NextMark color={i === 0 ? "#b8b8b8" : i === 4 ? ORANGE : "#959595"} />
              </React.Fragment>
            ))}
            <UploadPill>
              <UploadCap>
                <UploadIcon size={24} stroke={2} />
              </UploadCap>
              <Caption>上 传</Caption>
            </UploadPill>
          </Steps>
        </Viewport>
        <RightPanel>
          <Title>切片结果</Title>
          <ResultRow $height={39}>
            <ResultLabel>打印时间</ResultLabel>
            <ResultValue $kind="hot">0min</ResultValue>
          </ResultRow>
          <ResultRow $height={23}>
            <ResultLabel>材料基础量</ResultLabel>
            <ResultValue>20g</ResultValue>
          </ResultRow>
          <ResultRow $height={35}>
            <ResultLabel>打印总重量</ResultLabel>
            <ResultValue>112g</ResultValue>
          </ResultRow>
          <ResultRow $height={25} $minor>
            <ResultLabel $minor>模型重量</ResultLabel>
            <ResultValue $kind="minor">91g</ResultValue>
          </ResultRow>
          <ResultRow $height={31} $minor>
            <ResultLabel $minor>支撑重量</ResultLabel>
            <ResultValue $kind="minor">21g</ResultValue>
          </ResultRow>
          <Rule $top={10} $bottom={13} />
          <Title>打印参数设置</Title>
          <OutlineButton $gap={17} $top={11}>
            <svg width="17" height="17" viewBox="0 0 17 17" fill="none" stroke="#f0834b" strokeWidth="1.6">
              <path d="M0.8 0.8H16.2V16.2H0.8zM1 5.6H16M3 9.2H4.6M6 9.2H14M3 12.4H4.6M6 12.4H14" />
            </svg>
            <Caption>打印参数编辑</Caption>
          </OutlineButton>
          <Rule $top={22} $bottom={13} />
          <Title>切片文件</Title>
          <OutlineButton $gap={17} $top={11} $inset={3}>
            <svg width="19" height="20" viewBox="0 0 19 20" fill="none" stroke={ORANGE} strokeWidth="1.5">
              <path d="M9 1.2H0.8V19H18.2V11.5" />
              <path d="M12.5 1L18.2 6L12.5 11V8.3Q8 9 6.3 14Q5.5 5.5 12.5 3.8z" strokeWidth="1.2" />
            </svg>
            <Caption>导 出</Caption>
          </OutlineButton>
          <OutlineButton $gap={17} $top={22} $inset={3}>
            <UploadIcon size={19} stroke={2.2} />
            <Caption>上 传</Caption>
          </OutlineButton>
        </RightPanel>
      </Body>
      <WindowEdge />
    </Shell>
  );
}
